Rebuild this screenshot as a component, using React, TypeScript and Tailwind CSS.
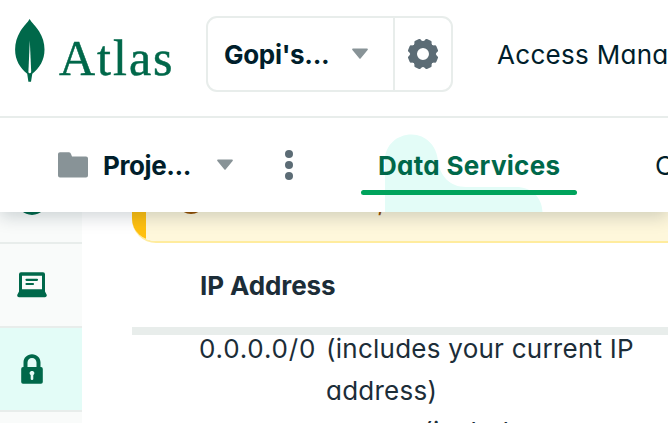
import React from "react";

function Leaf() {
  return (
    <svg className="block h-[64px] w-[30px] shrink-0" viewBox="0 0 30 64" aria-hidden="true">
      <path
        fill="#00684A"
        d="M14.6 0C16.5 3.6 20.8 7 24.2 12.5C27.6 18 29.5 23.8 29.5 30.5C29.5 41.5 24.6 48.5 17.3 54.8L16 62.8H13.4L12.2 54.8C5 48.5 .1 41.5 .1 30.5C.1 23.8 2 18 5.2 12.5C8.5 7 12.8 3.6 14.6 0Z"
      />
      <path fill="#FFFFFF" d="M14.8 21.5L16.2 53Q15.8 54.2 14.7 54.3Q13.6 54.2 13.4 53Z" />
    </svg>
  );
}

function Caret() {
  return (
    <svg className="block h-[12px] w-[16px] shrink-0" viewBox="0 0 16 12" aria-hidden="true">
      <path fill="#889397" d="M1 .5H15Q16.5 1 15.4 2.3L8.8 10.2Q8 11.2 7.2 10.2L.6 2.3Q-.5 1 1 .5Z" />
    </svg>
  );
}

function Gear() {
  return (
    <svg className="block size-[30px]" viewBox="-15 -15 30 30" aria-hidden="true">
      <g fill="#5C6C75">
        {[22.5, 67.5, 112.5, 157.5, 202.5, 247.5, 292.5, 337.5].map((angle) => (
          <path key={angle} d="M-4.8 -12Q-3.8 -12.8 -3.5 -14.1Q-3.2 -15.3 -2 -15.3H2Q3.2 -15.3 3.5 -14.1Q3.8 -12.8 4.8 -12V-8H-4.8Z" transform={`rotate(${angle})`} />
        ))}
      </g>
      <circle r="9.4" fill="none" stroke="#5C6C75" strokeWidth="6.8" />
    </svg>
  );
}

function Folder() {
  return (
    <svg className="block h-[26px] w-[30px] shrink-0" viewBox="0 0 30 26" aria-hidden="true">
      <path fill="#889397" d="M0 2Q0 .3 2 .3H11Q12.5 .3 13 2L14 4.5H28Q30 4.5 30 6.5V23.5Q30 25.5 28 25.5H2Q0 25.5 0 23.5Z" />
    </svg>
  );
}

function Laptop() {
  return (
    <svg className="block h-[26px] w-[30px]" viewBox="0 0 30 26" aria-hidden="true">
      <path
        fill="#00684A"
        fillRule="evenodd"
        d="M4 .3H26Q28 .3 28 2.3V19.5L29.8 23V23.5Q29.5 25.2 28 25.2H2Q.2 25.2 .2 23.5V23L2 19.5V2.3Q2 .3 4 .3ZM5 3.8V17.2H25V3.8Z"
      />
      <path stroke="#00684A" strokeWidth="2.2" strokeLinecap="round" d="M9.5 7.8H20M9.5 12H16" />
    </svg>
  );
}

function Lock() {
  return (
    <svg className="block h-[30px] w-[22px]" viewBox="0 0 22 30" aria-hidden="true">
      <path
        fill="#00684A"
        fillRule="evenodd"
        d="M2.5 13V8.5C2.5 3.8 6 .2 11 .2S19.5 3.8 19.5 8.5V13H20Q21.8 13 21.8 15V28Q21.8 29.8 20 29.8H2Q.2 29.8 .2 28V15Q.2 13 2 13ZM6.5 13H15.5V8.5C15.5 5.8 13.5 4 11 4S6.5 5.8 6.5 8.5ZM9.7 21V25Q9.7 26 11 26T12.3 25V21C14.4 19.5 13.2 17 11 17S7.6 19.5 9.7 21Z"
      />
    </svg>
  );
}

function TopBar() {
  return (
    <div className="flex h-[118px] items-start border-b-2 border-[#E8EDEB]">
      <div className="flex w-[206px] shrink-0 pt-[19px] pl-[15px]">
        <Leaf />
        <span className="mt-[8px] ml-[14px] font-['Liberation_Serif',serif] text-[50px] leading-[62px] tracking-[2px] text-[#00684A] [-webkit-text-stroke:0.5px_#00684A]">
          Atlas
        </span>
      </div>
      <div className="mt-[16px] flex h-[76px] w-[247px] shrink-0 rounded-[11px] border-2 border-[#E8EDEB]">
        <div className="flex w-[187px] items-center justify-between border-r-2 border-[#E8EDEB] pr-[25px] pl-[16px]">
          <span className="text-[26px] font-bold tracking-[-0.3px]">Gopi's...</span>
          <Caret />
        </div>
        <div className="flex flex-1 items-center justify-center">
          <Gear />
        </div>
      </div>
      <span className="mt-[35px] ml-[44px] text-[26px] leading-[40px] tracking-[0.3px]">Access Manager</span>
    </div>
  );
}

function ProjectBar() {
  return (
    <div className="flex h-[94px] items-start">
      <div className="flex h-[94px] w-[361px] shrink-0 items-center pl-[58px]">
        <Folder />
        <span className="ml-[15px] w-[114px] text-[26px] font-bold tracking-[-0.4px]">Proje...</span>
        <Caret />
        <div className="ml-[52px] flex flex-col gap-[3px]">
          <i className="size-[8px] rounded-full bg-[#5C6C75]" />
          <i className="size-[8px] rounded-full bg-[#5C6C75]" />
          <i className="size-[8px] rounded-full bg-[#5C6C75]" />
        </div>
      </div>
      <div className="relative h-[94px] w-[216px] shrink-0">
        <svg className="absolute top-[16px] left-[24px] h-[78px] w-[160px]" viewBox="0 0 160 78" aria-hidden="true">
          <path fill="#E3FCF7" d="M0 78V26C0 11 12 .5 26.5 .5S52 12 53 27C55 42 65 53 81 53H131C146 53 157 63 157.5 78Z" />
        </svg>
        <div className="relative flex h-[77px] flex-col justify-between pt-[28px]">
          <span className="pl-[17px] text-[26px] leading-[40px] font-bold tracking-[0.3px] text-[#00684A]">Data Services</span>
          <div className="h-[5px] rounded-full bg-[#00A35C]" />
        </div>
      </div>
      <span className="mt-[28px] ml-[78px] text-[26px] leading-[40px]">Charts</span>
    </div>
  );
}

function Sidebar() {
  return (
    <nav className="w-[82px] shrink-0 bg-[#F9FBFA]">
      <div className="flex h-[32px] flex-col items-center border-b-2 border-[#E8EDEB] pr-[18px]">
        <div className="-mt-[27px] size-[30px] shrink-0 rounded-full bg-[#00684A]" />
      </div>
      <div className="flex h-[84px] items-center justify-center border-b-2 border-[#E8EDEB] pr-[18px]">
        <Laptop />
      </div>
      <div className="flex h-[84px] items-center justify-center border-b-2 border-[#E8EDEB] bg-[#E3FCF7] pr-[18px]">
        <Lock />
      </div>
    </nav>
  );
}

function AccessList() {
  return (
    <main className="ml-[50px] flex-1 text-[#1C2D38]">
      <div className="h-[31px] overflow-hidden rounded-bl-[24px] border-b-2 border-[#FFEC9E] bg-[#FEF7DB]">
        <div className="flex h-[31px] w-[700px] bg-[linear-gradient(to_right,#FFC010_14px,#FEF7DB_14px)]">
          <div className="-mt-[26px] ml-[45px] size-[28px] rounded-full bg-[#944F01]" />
          <span className="-mt-[25px] ml-[172px] text-[26px] leading-[30px] text-[#944F01]">,</span>
        </div>
      </div>
      <div className="flex h-[84px] items-center pl-[68px]">
        <h2 className="text-[26px] font-bold tracking-[-0.1px]">IP Address</h2>
      </div>
      <div className="h-[8px] w-[700px] bg-[#E8EDEB]" />
      <div className="flex w-[700px] pl-[67px] text-[26px] leading-[42px]">
        <span className="-mt-[7px] w-[127px] shrink-0 tracking-[0.8px]">0.0.0.0/0</span>
        <span className="-mt-[7px] w-[340px] whitespace-normal tracking-[0.25px]">
          (includes your current IP
          <br />
          address)
        </span>
      </div>
      <div className="-mt-px pl-[291px] text-[26px] leading-[42px] tracking-[0.4px]">(includes</div>
    </main>
  );
}

export default function App() {
  return (
    <div className="h-[423px] w-[668px] overflow-hidden bg-white font-['Inter','Liberation_Sans',sans-serif] whitespace-nowrap text-[#001E2B] [font-feature-settings:'cv11']">
      <header className="relative z-10 h-[212px] bg-white shadow-[0_5px_16px_rgba(0,30,43,0.18)]">
        <TopBar />
        <ProjectBar />
      </header>
      <div className="flex h-[211px]">
        <Sidebar />
        <AccessList />
      </div>
    </div>
  );
}
